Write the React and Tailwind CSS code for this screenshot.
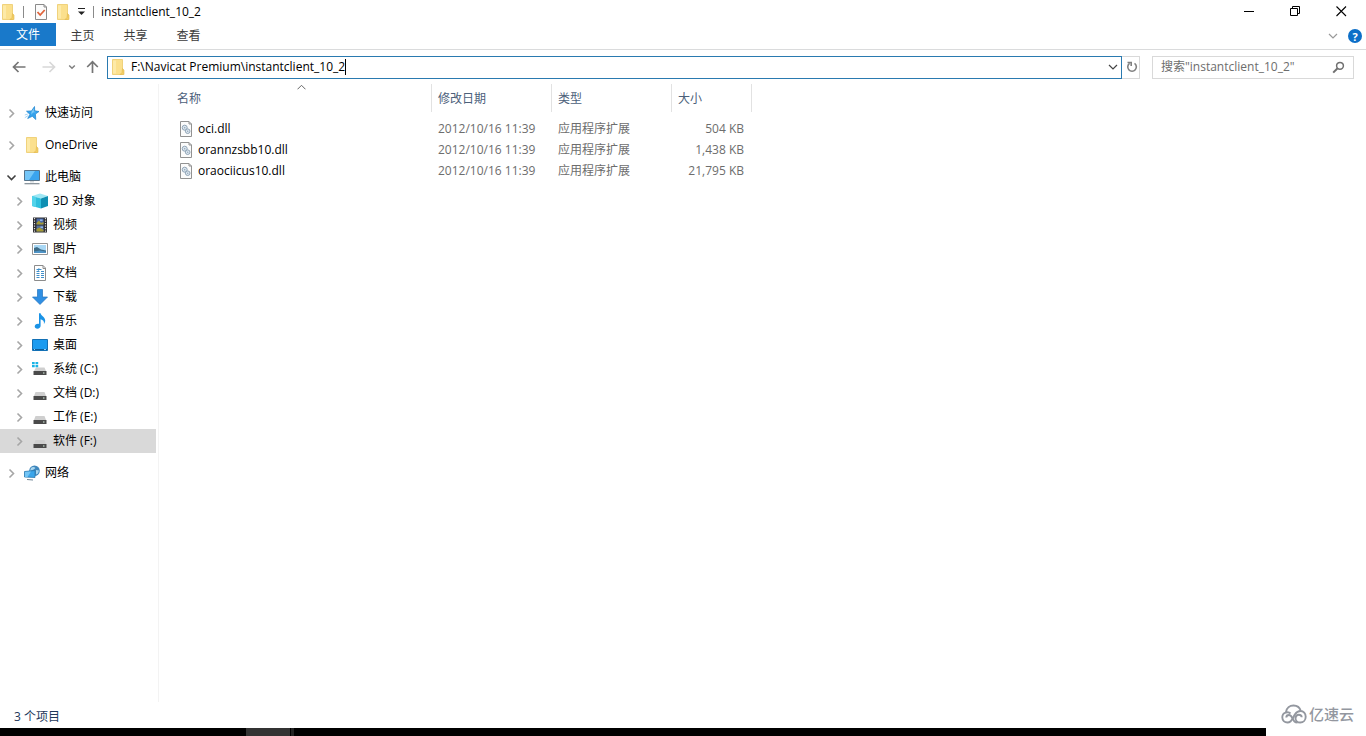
import React, { useState } from "react";

const FolderIcon = () => (
  <svg width="16" height="16" viewBox="0 0 16 16" className="shrink-0">
    <path d="M2.500.5h10v15h-10z" fill="#fbe08d" stroke="#ecca6a" strokeWidth="0.8" />
    <path d="M3 1.500h3v13H3z" fill="#fdeaa8" />
    <path d="M12.500 9.500l1.500 1.500v4.500h-4l1-1 1-1z" fill="#f3cf68" stroke="#e3b94c" strokeWidth="0.6" />
  </svg>
);

const CheckPageIcon = () => (
  <svg width="14" height="16" viewBox="0 0 14 16" className="shrink-0">
    <path d="M1.500.5h8.500l2.500 2.500v12.500h-11z" fill="#fbfbfb" stroke="#8a8a8a" />
    <path d="M10 .5v2.500h2.500" fill="none" stroke="#8a8a8a" />
    <path d="M3.500 8l2.700 3L10.700 6" fill="none" stroke="#e0633a" strokeWidth="1.800" />
  </svg>
);

const StarIcon = () => (
  <svg width="16" height="16" viewBox="0 0 16 16" className="shrink-0">
    <path
      d="M10.500 1.500l.2 4.300 4.300.7-3.600 2.600.4 5.400-3.500-3.200-4.600 2.200L6 9.400 2.500 6.200l5-.3z"
      fill="#35a2ec"
      stroke="#1b83cf"
      strokeWidth="0.7"
    />
    <path d="M.8 12.700l3.500-2.200M.8 10l3-1" stroke="#8cc8f2" strokeWidth="0.8" />
    <path d="M9.900 3.500l-.1 3 2.700.6-3.500.4-1.700 2.200.2-3z" fill="#7fcaf7" />
  </svg>
);

const ComputerIcon = () => (
  <svg width="16" height="16" viewBox="0 0 16 16" className="shrink-0">
    <path d="M.5 1.500h15v10H.5z" fill="#3ba4ef" stroke="#56738a" />
    <path d="M1 2h10L5 11H1z" fill="#74c6f8" />
    <path d="M6 12h4v1.500H6z" fill="#d5dade" />
    <path d="M.5 14.700h15" stroke="#7f8b94" strokeWidth="1.200" />
  </svg>
);

const CubeIcon = () => (
  <svg width="16" height="16" viewBox="0 0 16 16" className="shrink-0">
    <path d="M0 3l8-2.500L16 3 9 5.500z" fill="#9ee7f4" />
    <path d="M0 3l9 2.500v10L0 13z" fill="#2fc0dd" />
    <path d="M9 5.500L16 3v10l-7 2.500z" fill="#0e8fb2" />
    <path d="M0 3l4 1.100V14L0 13z" fill="#52d3ea" />
  </svg>
);

const VideoIcon = () => (
  <svg width="16" height="16" viewBox="0 0 16 16" className="shrink-0">
    <path d="M1 .5h14v15H1z" fill="#2b2b2f" />
    <path d="M2.500 1v14M13.500 1v14" stroke="#dedede" strokeWidth="1.200" strokeDasharray="1.200 1.300" />
    <path d="M4.500 1.500h7v6h-7z" fill="#4b6aa8" />
    <path d="M4.500 8.500h7v6h-7z" fill="#55709e" />
    <path d="M4.500 6l2.500-2.500L9 6l2.500-1v2.500h-7zM4.500 12l3-1.500 4 2.500v1.500h-7z" fill="#a59a35" />
    <path d="M8 2.500h2.500V4H8zM8.500 9.500H11V11H8.500z" fill="#8fb2ea" />
  </svg>
);

const PictureIcon = () => (
  <svg width="16" height="16" viewBox="0 0 16 16" className="shrink-0">
    <path d="M.5 2.500h15v11H.5z" fill="#fff" stroke="#959595" />
    <path d="M2 4h12v8H2z" fill="#a9d8f5" />
    <path d="M2 7l3-1 4 2.500 5 1V12H2z" fill="#3e6c87" />
    <path d="M2 10.500l6-1 6 1.200V12H2z" fill="#4f94c6" />
  </svg>
);

const DocumentIcon = () => (
  <svg width="16" height="16" viewBox="0 0 16 16" className="shrink-0">
    <path d="M2.500.5h8.500l2.500 2.500v12.500h-11z" fill="#fff" stroke="#8c8c8c" />
    <path d="M11 .5v3h3" fill="none" stroke="#8c8c8c" />
    <path d="M4.500 4.500h5M4.500 6.500h3M9 6.500h3M4.500 8.500h3M9 8.500h3M4.500 10.500h3M9 10.500h3M4.500 12.500h3M9 12.500h3" stroke="#3f8fca" />
    <path d="M7 3l-1 4" stroke="#3f8fca" strokeWidth="0.8" />
  </svg>
);

const DownloadIcon = () => (
  <svg width="16" height="16" viewBox="0 0 16 16" className="shrink-0">
    <path d="M5.500.5h5v7.500h5L8 15.500.5 8h5z" fill="#2f8fe3" stroke="#2373bd" strokeWidth="0.7" />
  </svg>
);

const MusicIcon = () => (
  <svg width="16" height="16" viewBox="0 0 16 16" className="shrink-0">
    <path
      d="M7 .3h1.600c.3 2.700 4.600 3.600 4.600 7.200 0 1.300-.5 2.500-1.300 3.500.5-2.700-.8-4-3.300-4.700v6.500c0 1.700-1.400 2.900-3.200 2.900-1.700 0-2.700-1-2.700-2.200 0-1.600 1.700-3 4.300-2.600z"
      fill="#1a93e6"
    />
  </svg>
);

const DesktopIcon = () => (
  <svg width="16" height="16" viewBox="0 0 16 16" className="shrink-0">
    <path d="M.5 2.500h15v11H.5z" fill="#1b9bf0" stroke="#1370b5" />
    <path d="M1 12.500h14" stroke="#0e5c96" />
    <path d="M2 12.500h1M12 12.500h2" stroke="#8fd0fa" />
  </svg>
);

const DriveIcon = () => (
  <svg width="16" height="16" viewBox="0 0 16 16" className="shrink-0">
    <path d="M3.500 7h9L14 11H2z" fill="#cfcfcf" />
    <path d="M1.500 11h13v4h-13z" fill="#4a4a4a" />
    <path d="M11 13h1.500" stroke="#d9f3e0" />
  </svg>
);

const SystemDriveIcon = () => (
  <svg width="16" height="16" viewBox="0 0 16 16" className="shrink-0">
    <path d="M4 6.500h8.500L14 10H2z" fill="#cfcfcf" />
    <path d="M0 1h2.700v2.300H0zM3.500 1h2.700v2.300H3.500zM0 4h2.700v2.300H0zM3.500 4h2.700v2.300H3.500z" fill="#19b3e6" />
    <path d="M1.500 10h13v4h-13z" fill="#4a4a4a" />
    <path d="M11 12h1.500" stroke="#d9f3e0" />
  </svg>
);

const NetworkIcon = () => (
  <svg width="16" height="16" viewBox="0 0 16 16" className="shrink-0">
    <circle cx="10.500" cy="5.800" r="5.300" fill="#3f87bd" />
    <path d="M7 3c2-1.500 3-1 4-.5s-1 2-2.500 2.500L6 6zM12 5l3 .5-1 3-2 1z" fill="#a8d6ef" />
    <path d="M.5 6.500l10.500-1v7L.5 12z" fill="#3aa5ea" stroke="#2b78ad" strokeWidth="0.8" />
    <path d="M1 7l6-.5L3.500 12H1z" fill="#72c4f5" />
    <path d="M3 14.500l6 .5" stroke="#6d8495" />
  </svg>
);

const DllIcon = () => (
  <svg width="16" height="16" viewBox="0 0 16 16" className="shrink-0">
    <path d="M2.500.5h8.500l2.500 2.500v12.500h-11z" fill="#fbfbfb" stroke="#929292" />
    <path d="M11 .5V3h2.500" fill="none" stroke="#929292" />
    <circle cx="6.700" cy="6.700" r="2.500" fill="#dde7f0" stroke="#91a5b7" />
    <circle cx="6.700" cy="6.700" r=".8" fill="#91a5b7" />
    <circle cx="9.700" cy="10.200" r="2.300" fill="#dde7f0" stroke="#91a5b7" />
    <circle cx="9.700" cy="10.200" r=".7" fill="#91a5b7" />
  </svg>
);

const Chevron = ({ open }) => (
  <svg width="11" height="11" viewBox="0 0 11 11" className="shrink-0">
    {open ? (
      <path d="M1.500 3.500l4 4 4-4" fill="none" stroke="#404040" strokeWidth="1.600" />
    ) : (
      <path d="M3.500 1.500l4 4-4 4" fill="none" stroke="#a6a6a6" strokeWidth="1.600" />
    )}
  </svg>
);

const ThinChevron = () => (
  <svg width="10" height="10" viewBox="0 0 10 10" fill="none" stroke="currentColor">
    <path d="M1 3l4 4 4-4" strokeWidth="1.200" />
  </svg>
);

const pcChildren = [
  { name: "3D 对象", Icon: CubeIcon },
  { name: "视频", Icon: VideoIcon },
  { name: "图片", Icon: PictureIcon },
  { name: "文档", Icon: DocumentIcon },
  { name: "下载", Icon: DownloadIcon },
  { name: "音乐", Icon: MusicIcon },
  { name: "桌面", Icon: DesktopIcon },
  { name: "系统 (C:)", Icon: SystemDriveIcon },
  { name: "文档 (D:)", Icon: DriveIcon },
  { name: "工作 (E:)", Icon: DriveIcon },
  { name: "软件 (F:)", Icon: DriveIcon },
];

const files = [
  { name: "oci.dll", date: "2012/10/16 11:39", type: "应用程序扩展", size: "504 KB" },
  { name: "orannzsbb10.dll", date: "2012/10/16 11:39", type: "应用程序扩展", size: "1,438 KB" },
  { name: "oraociicus10.dll", date: "2012/10/16 11:39", type: "应用程序扩展", size: "21,795 KB" },
];

function TreeItem({ name, Icon, open, child, selected, onClick }) {
  return (
    <button
      onClick={onClick}
      className={`flex h-6 w-full items-center gap-[7px] whitespace-nowrap ${
        child ? "pl-3.5" : "pl-1.5"
      } ${selected ? "bg-[#d9d9d9]" : ""}`}
    >
      <Chevron open={open} />
      <span className="flex items-center gap-[5px]">
        <Icon />
        {name}
      </span>
    </button>
  );
}

function TitleBar() {
  return (
    <header className="flex h-[23px] items-center justify-between">
      <div className="flex items-center">
        <FolderIcon />
        <span className="ml-[7px] h-3 w-px bg-[#8a8a8a]" />
        <button aria-label="属性" className="ml-2.5">
          <CheckPageIcon />
        </button>
        <button aria-label="新建文件夹" className="ml-[7px]">
          <FolderIcon />
        </button>
        <button aria-label="自定义快速访问工具栏" className="ml-[7px]">
          <svg width="8" height="9" viewBox="0 0 8 9">
            <path d="M0 1.500h7" stroke="#222" />
            <path d="M0 4.500h7L3.500 8z" fill="#222" />
          </svg>
        </button>
        <span className="ml-[7px] h-3 w-px bg-[#8a8a8a]" />
        <h1 className="ml-[7px]">instantclient_10_2</h1>
      </div>
      <div className="flex h-5 pr-0.5">
        <button aria-label="最小化" className="flex w-[46px] items-center justify-center">
          <svg width="11" height="11" viewBox="0 0 11 11">
            <path d="M0 5.500h10" stroke="#000" />
          </svg>
        </button>
        <button aria-label="还原" className="flex w-[46px] items-center justify-center">
          <svg width="11" height="11" viewBox="0 0 11 11" fill="none" stroke="#000">
            <path d="M.5 2.500h7v7h-7zM2.500 2.500v-2h7v7h-2" />
          </svg>
        </button>
        <button aria-label="关闭" className="flex w-[46px] items-center justify-center">
          <svg width="11" height="11" viewBox="0 0 11 11">
            <path d="M.5.5l9.500 9.500M10 .5L.5 10" stroke="#000" strokeWidth="1.100" />
          </svg>
        </button>
      </div>
    </header>
  );
}

function Ribbon() {
  return (
    <nav className="flex h-[27px] items-start justify-between border-b border-[#dadbdc]">
      <div className="flex h-[23px]">
        <button className="w-14 bg-[#1979ca] pt-px text-white">文件</button>
        {["主页", "共享", "查看"].map((tab) => (
          <button key={tab} className="w-[53px] pt-0.5 text-[#3b3b3b]">
            {tab}
          </button>
        ))}
      </div>
      <div className="flex h-[26px] items-center gap-2.5 pr-1 text-[#9a9a9a]">
        <button aria-label="展开功能区">
          <ThinChevron />
        </button>
        <button
          aria-label="帮助"
          className="flex size-3.5 items-center justify-center rounded-full bg-[#0d6fc8] text-[11px] leading-none font-bold text-white"
        >
          ?
        </button>
      </div>
    </nav>
  );
}

function AddressBar({ path, setPath }) {
  return (
    <div className="flex h-[34px] items-center pr-3">
      <button aria-label="后退" className="ml-3">
        <svg width="14" height="12" viewBox="0 0 14 12" fill="none" stroke="#757575" strokeWidth="1.700">
          <path d="M1.500 6H13.500M6.500 1L1.500 6l5 5" />
        </svg>
      </button>
      <button aria-label="前进" className="ml-4">
        <svg width="14" height="12" viewBox="0 0 14 12" fill="none" stroke="#d8d8d8" strokeWidth="1.700">
          <path d="M.5 6H12.500M7.500 1l5 5-5 5" />
        </svg>
      </button>
      <button aria-label="最近浏览的位置" className="ml-3">
        <svg width="8" height="8" viewBox="0 0 8 8" fill="none" stroke="#808080" strokeWidth="1.500">
          <path d="M1.200 2.500L4 5.300l2.800-2.800" />
        </svg>
      </button>
      <button aria-label="上移" className="ml-2.5">
        <svg width="13" height="14" viewBox="0 0 13 14" fill="none" stroke="#757575" strokeWidth="1.700">
          <path d="M6.500 13V1.800M1.200 7l5.300-5.300L11.800 7" />
        </svg>
      </button>
      <div className="ml-2 flex h-[23px] flex-1 items-center border border-[#2a7ab0] pr-[3px] pl-0.5">
        <FolderIcon />
        <input
          aria-label="地址"
          value={path}
          onChange={(e) => setPath(e.target.value)}
          className="ml-[5px] field-sizing-content caret-transparent outline-none"
        />
        <span className="h-4 w-px bg-black" />
        <button aria-label="上一个位置" className="ml-auto text-[#444]">
          <ThinChevron />
        </button>
      </div>
      <button
        aria-label="刷新"
        className="flex h-[23px] w-[18px] items-center justify-center border border-l-0 border-[#d9d9d9] pl-0.5"
      >
        <svg width="12" height="12" viewBox="0 0 12 12" fill="none" stroke="#808080" strokeWidth="1.600">
          <path d="M8.500 2.400A4.300 4.300 0 1 1 3.600 2.400" />
          <path d="M1.500 1.500h3.700v3.500" />
        </svg>
      </button>
      <div className="ml-3 flex h-[23px] w-[202px] items-center border border-[#d9d9d9] px-2">
        <input
          aria-label="搜索"
          placeholder={'搜索"instantclient_10_2"'}
          className="min-w-0 flex-1 outline-none placeholder:text-[#6d6d6d]"
        />
        <svg width="13" height="13" viewBox="0 0 13 13" fill="none" stroke="#707070">
          <circle cx="8" cy="4.800" r="3.400" strokeWidth="1.500" />
          <path d="M5.600 7.200L1.200 11.600" strokeWidth="2" />
        </svg>
      </div>
    </div>
  );
}

function FileTable() {
  const headCell = "relative h-7 border-r border-[#e2e2e2] pt-0.5 pl-1.5 text-left font-normal";
  return (
    <table className="ml-3 table-fixed border-separate border-spacing-0 whitespace-nowrap">
      <thead className="text-[#4c607a]">
        <tr>
          <th className={`${headCell} w-[261px]`}>
            名称
            <span className="absolute inset-x-0 top-0 flex justify-center text-[#666]">
              <svg width="9" height="6" viewBox="0 0 9 6" fill="none" stroke="currentColor">
                <path d="M.5 5.300l4-4 4 4" />
              </svg>
            </span>
          </th>
          <th className={`${headCell} w-[120px]`}>修改日期</th>
          <th className={`${headCell} w-[120px]`}>类型</th>
          <th className={`${headCell} w-20`}>大小</th>
        </tr>
      </thead>
      <tbody className="text-[#6d6d6d] before:block before:h-1.5">
        {files.map((file) => (
          <tr key={file.name} className="h-[21px]">
            <td className="pl-[7px]">
              <span className="flex items-center gap-1 text-black">
                <DllIcon />
                {file.name}
              </span>
            </td>
            <td className="pl-1.5">{file.date}</td>
            <td className="pl-1.5">{file.type}</td>
            <td className="pr-2 text-right">{file.size}</td>
          </tr>
        ))}
      </tbody>
    </table>
  );
}

export default function App() {
  const [path, setPath] = useState("F:\\Navicat Premium\\instantclient_10_2");
  const [selected, setSelected] = useState("软件 (F:)");

  return (
    <div className="relative flex min-h-screen flex-col bg-white font-['Open_Sans','Noto_Sans_CJK_SC',sans-serif] text-[12px] leading-4 text-black">
      <TitleBar />
      <Ribbon />
      <AddressBar path={path} setPath={setPath} />
      <main className="flex flex-1">
        <aside className="flex w-[159px] shrink-0 flex-col gap-2 border-r border-[#f3f3f3] pt-[17px] pr-0.5">
          <TreeItem name="快速访问" Icon={StarIcon} />
          <TreeItem name="OneDrive" Icon={FolderIcon} />
          <div>
            <TreeItem name="此电脑" Icon={ComputerIcon} open />
            {pcChildren.map((item) => (
              <TreeItem
                key={item.name}
                name={item.name}
                Icon={item.Icon}
                child
                selected={selected === item.name}
                onClick={() => setSelected(item.name)}
              />
            ))}
          </div>
          <TreeItem name="网络" Icon={NetworkIcon} />
        </aside>
        <section className="flex-1">
          <FileTable />
        </section>
      </main>
      <footer>
        <p className="flex h-[26px] items-center pt-1 pl-3.5 text-[#1e395b]">3 个项目</p>
        <div className="mr-[100px] flex h-2 bg-black">
          <span className="ml-[246px] w-11 bg-[#333]" />
          <span className="ml-px w-[3px] bg-[#222]" />
        </div>
      </footer>
      <div className="absolute right-3 bottom-3 flex items-center gap-0.5 text-[15px] leading-5 font-medium text-[#93979f]">
        <svg width="26" height="20" viewBox="0 0 26 20" fill="none" stroke="currentColor" strokeWidth="1.900">
          <path d="M5 8.200C5.500 4 8.800 1.500 12.500 1.500c3.500 0 6.300 2 7.200 5.300" />
          <path d="M9.500 9.500C7.500 7.300 1.300 8 1.300 13.300c0 3 2.200 5.200 5.200 5.200 4.500 0 5-4.500 7.500-8.200 1.500-2.200 3.500-3.300 5.500-3.300 3 0 5.200 2.600 5.200 5.700 0 3.300-2.300 5.800-5.500 5.800-2.700 0-4.700-2-4.700-4.300 0-2 1.500-3.500 3.300-3.500s2.900 1.200 2.900 2.600" />
          <path d="M5.300 13.500c0-1.500 1.200-2.500 2.700-2.500 3 0 3.500 4.500 5.500 6.500.8.800 1.800 1 3 1" />
        </svg>
        亿速云
      </div>
    </div>
  );
}
